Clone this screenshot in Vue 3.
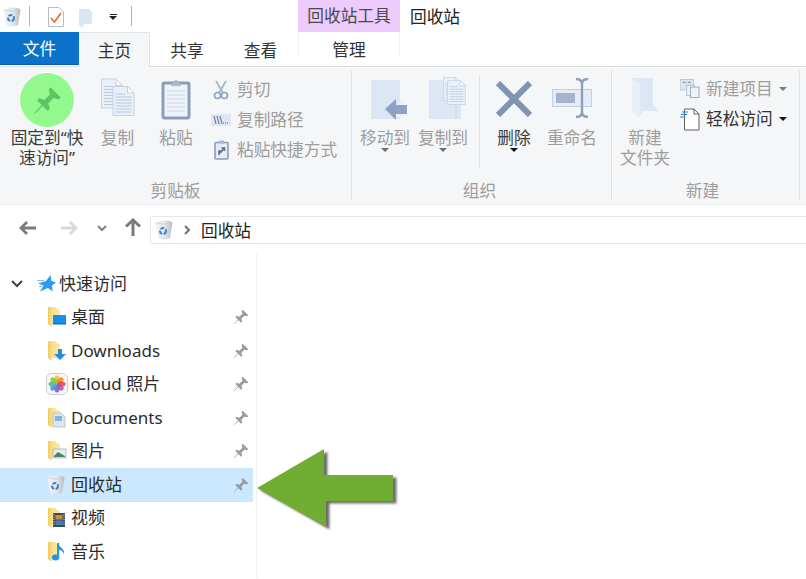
<script setup>
const navRows = [
  { label: '桌面', icon: 'desktop', pin: true },
  { label: 'Downloads', icon: 'download', pin: true },
  { label: 'iCloud 照片', icon: 'photos', pin: true },
  { label: 'Documents', icon: 'docs', pin: true },
  { label: '图片', icon: 'pictures', pin: true },
  { label: '回收站', icon: 'bin', pin: true, active: true },
  { label: '视频', icon: 'video', pin: false },
  { label: '音乐', icon: 'music', pin: false }
]
const petals = [
  ['#f2c230', 0], ['#f08a2c', 45], ['#e8483c', 90], ['#c04fa8', 135],
  ['#7a62c8', 180], ['#4a90e0', 225], ['#52b8a0', 270], ['#8cc63f', 315]
]
</script>

<template>
  <div class="window">
    <svg class="defs" width="0" height="0" aria-hidden="true">
      <defs>
        <linearGradient id="binGrad" x1="0" y1="0" x2="1" y2="0">
          <stop offset="0" stop-color="#f4f5f6" />
          <stop offset="0.6" stop-color="#e0e3e5" />
          <stop offset="1" stop-color="#b4b9bd" />
        </linearGradient>
        <linearGradient id="folderGrad" x1="0" y1="0" x2="1" y2="0">
          <stop offset="0" stop-color="#eecb63" />
          <stop offset="0.35" stop-color="#fbe08a" />
          <stop offset="1" stop-color="#fde9a5" />
        </linearGradient>
        <filter id="soft" x="-10%" y="-10%" width="120%" height="120%">
          <feGaussianBlur stdDeviation="0.9" />
        </filter>
        <symbol id="pin" viewBox="0 0 24 24">
          <path d="M14.5 1 L23 9.5 L21 11 L17 10 L12.5 14.5 L14 19 L12 20.5 L8 16.5 L1.5 23 L1 22.5 L7.3 15.7 L3.5 12 L5 10 L9.5 11.5 L14 7 L13 3Z" />
        </symbol>
        <symbol id="bin" viewBox="0 0 18 20">
          <path d="M0.5 3 L3 1.5 Q9 0 15 1 L17.5 2.5 L15 18 Q9 20.5 3.5 18.5Z" fill="url(#binGrad)" />
          <path d="M0.5 3 Q9 5.5 17.5 2.5" fill="none" stroke="#c9cdd1" stroke-width=".8" />
          <circle cx="8" cy="11" r="3" fill="none" stroke="#2f86d8" stroke-width="2" stroke-dasharray="4 1.5" />
        </symbol>
        <symbol id="folder" viewBox="0 0 20 20">
          <path d="M1 0 H8 L10 2 L13 3 V17 H5 V20 L1 17Z" fill="url(#folderGrad)" />
        </symbol>
        <symbol id="doc" viewBox="0 0 22 30">
          <path d="M.5 .5 H15 L21.5 7 V29.5 H.5Z" fill="#eaf0f9" stroke="#c5d1e3" />
          <path d="M15 .5 V7 H21.5Z" fill="#fafcff" stroke="#c5d1e3" />
          <path d="M3 8h10M3 11h16M3 14h16M3 17h16M3 20h16M3 23h16M3 26h16" stroke="#bcc8db" stroke-width="1" />
        </symbol>
      </defs>
    </svg>

    <div class="titlebar">
      <div class="qat">
        <svg class="qat-bin" width="18" height="20"><use href="#bin" /></svg>
        <span class="qat-sep"></span>
        <svg class="qat-check" width="16" height="20" viewBox="0 0 16 20">
          <path d="M.5 .5 H11 L15.5 5 V19.5 H.5Z" fill="#fff" stroke="#b9bdc3" />
          <path d="M3 11 L6.5 15 L13 6" fill="none" stroke="#ef6a23" stroke-width="1.7" />
        </svg>
        <svg class="qat-folder" width="14" height="19" viewBox="0 0 14 19">
          <path d="M0 0 H10 L13 3 V15 H5 L3 19 L0 16Z" fill="#dbe6f5" />
        </svg>
        <span class="qat-more"><i></i><b></b></span>
        <span class="qat-sep last"></span>
      </div>
      <div class="context-tab">回收站工具</div>
      <div class="title">回收站</div>
    </div>

    <div class="tabs">
      <div class="tab file">文件</div>
      <div class="tab home">主页</div>
      <div class="tab share">共享</div>
      <div class="tab view">查看</div>
      <div class="tab manage">管理</div>
    </div>

    <div class="ribbon">
      <section class="group g1">
        <div class="group-body">
          <div class="big pin-btn">
            <div class="big-icon">
              <span class="pin-circle">
                <svg class="pin-big" width="31" height="29"><use href="#pin" /></svg>
              </span>
            </div>
            <div class="big-text dark">固定到“快<br />速访问”</div>
          </div>
          <div class="big copy-btn">
            <div class="big-icon">
              <svg width="36" height="40" viewBox="0 0 36 40">
                <use href="#doc" x="1" y="0" width="22" height="31" />
                <use href="#doc" x="12" y="8" width="23" height="30" />
              </svg>
            </div>
            <div class="big-text">复制</div>
          </div>
          <div class="big paste-btn">
            <div class="big-icon">
              <svg width="30" height="42" viewBox="0 0 30 42">
                <rect x="2" y="5" width="26" height="35" rx="1.5" fill="#eef2f9" stroke="#8c9dbc" stroke-width="3" />
                <path d="M6 13h18M6 17h18M6 21h18M6 25h18M6 29h18M6 33h18" stroke="#cdd7e7" />
                <path d="M11 6 L13 3 A2.5 2.5 0 0 1 17 3 L19 6 L20 8 H10Z" fill="#aab8d0" />
              </svg>
            </div>
            <div class="big-text">粘贴</div>
          </div>
          <div class="small-col clip-col">
            <div class="small">
              <span class="small-icon">
                <svg width="16" height="20" viewBox="0 0 16 20">
                  <path d="M3 1 L10 13 M13 1 L6 13" stroke="#a9b6cb" stroke-width="1.8" fill="none" />
                  <circle cx="4.5" cy="15.5" r="3" fill="none" stroke="#8ca0bf" stroke-width="1.6" />
                  <circle cx="11.5" cy="15.5" r="3" fill="none" stroke="#8ca0bf" stroke-width="1.6" />
                </svg>
              </span>
              <span>剪切</span>
            </div>
            <div class="small">
              <span class="small-icon">
                <svg width="20" height="12" viewBox="0 0 20 12">
                  <rect width="20" height="12" fill="#dfe6f3" />
                  <path d="M3 2 L5 10 M6 2 L8 10 M9 2 L11 10" stroke="#5f6b7c" stroke-width="1" fill="none" />
                  <path d="M12 9h6" stroke="#5f6b7c" stroke-dasharray="1 1" />
                </svg>
              </span>
              <span>复制路径</span>
            </div>
            <div class="small">
              <span class="small-icon">
                <svg width="15" height="20" viewBox="0 0 15 20">
                  <rect x="1" y="2.5" width="13" height="16.5" rx="1" fill="#e5ebf5" stroke="#8c9dbc" stroke-width="1.6" />
                  <rect x="5" y="0.5" width="5" height="3" fill="#aab8d0" />
                  <path d="M5 15 V11 H8 M6 13 L10 8.5 M7.5 8 H10.5 V11" stroke="#5e6f8a" stroke-width="1.6" fill="none" />
                </svg>
              </span>
              <span>粘贴快捷方式</span>
            </div>
          </div>
        </div>
        <div class="group-label">剪贴板</div>
      </section>

      <section class="group g2">
        <div class="group-body">
          <div class="big move-btn">
            <div class="big-icon">
              <svg class="move-icon" width="37" height="43" viewBox="0 0 37 43">
                <rect x="0" y="2" width="29" height="39" fill="#dde6f5" />
                <path d="M29 21 L33 26 V39 H22Z" fill="#edf1f8" />
                <path d="M14 31 L25 21 V27 H36 V36 H25 V42Z" fill="#8ea3c3" />
              </svg>
            </div>
            <div class="big-text">移动到</div>
            <i class="caret"></i>
          </div>
          <div class="big copyto-btn">
            <div class="big-icon">
              <svg class="copyto-icon" width="38" height="43" viewBox="0 0 38 43">
                <rect x="0" y="3" width="32" height="39" fill="#dde6f5" />
                <path d="M27 3 V42" stroke="#cbd6e8" />
                <use href="#doc" x="14" y="0" width="18" height="24" />
                <use href="#doc" x="18" y="3" width="19" height="25" />
              </svg>
            </div>
            <div class="big-text">复制到</div>
            <i class="caret"></i>
          </div>
          <span class="inner-sep"></span>
          <div class="big delete-btn">
            <div class="big-icon">
              <svg width="36" height="36" viewBox="0 0 36 36">
                <path d="M2 2 L34 34 M34 2 L2 34" stroke="#8193b2" stroke-width="6" />
              </svg>
            </div>
            <div class="big-text dark">删除</div>
            <i class="caret black"></i>
          </div>
          <div class="big rename-btn">
            <div class="big-icon">
              <svg width="42" height="40" viewBox="0 0 42 40">
                <rect x="1.5" y="11.5" width="39" height="17" fill="#e5ebf7" stroke="#c4cfe2" />
                <rect x="5" y="15" width="19" height="10" fill="#a5b3cc" />
                <path d="M25 1 C29 1 31 3 31 6 V34 C31 37 29 39 25 39 M37 1 C33 1 31 3 31 6 M31 34 C31 37 33 39 37 39" fill="none" stroke="#8d9fbd" stroke-width="2.4" />
              </svg>
            </div>
            <div class="big-text">重命名</div>
          </div>
        </div>
        <div class="group-label">组织</div>
      </section>

      <section class="group g3">
        <div class="group-body">
          <div class="big newfolder-btn">
            <div class="big-icon">
              <svg width="28" height="40" viewBox="0 0 28 40">
                <path d="M1 0 H22 V26 L27 33 H11 L8 39 L1 33Z" fill="#dde6f4" />
                <path d="M1 0 L9 6 V39 L1 33Z" fill="#e9eff8" />
              </svg>
            </div>
            <div class="big-text">新建<br />文件夹</div>
          </div>
          <div class="small-col new-col">
            <div class="small">
              <span class="small-icon wide">
                <svg width="21" height="20" viewBox="0 0 21 20">
                  <rect x="0" y="0" width="14" height="11" fill="#dfe6f3" stroke="#b8c5da" />
                  <rect x="7" y="6" width="8" height="11" fill="#eef2f9" stroke="#aebcd3" />
                  <rect x="11" y="8" width="9" height="11" fill="#eef2f9" stroke="#98a9c4" />
                  <path d="M3 3h3M8 3h3" stroke="#6c7c94" />
                </svg>
              </span>
              <span>新建项目</span>
              <i class="caret side"></i>
            </div>
            <div class="small dark">
              <span class="small-icon wide">
                <svg width="20" height="23" viewBox="0 0 20 23">
                  <path d="M4.5 1 H14 L19 6 V22 H4.5Z" fill="#fff" stroke="#5e6166" />
                  <path d="M14 1 V6 H19" fill="none" stroke="#5e6166" />
                  <path d="M2 4h6M1 6.5h6M0 9h5" stroke="#2f86d8" />
                </svg>
              </span>
              <span>轻松访问</span>
              <i class="caret side black"></i>
            </div>
          </div>
        </div>
        <div class="group-label">新建</div>
      </section>
    </div>

    <div class="addressrow">
      <svg class="nav-arrow back" width="18" height="14" viewBox="0 0 18 14">
        <path d="M17 7 H2 M8 1 L2 7 L8 13" fill="none" stroke="#7a7a7a" stroke-width="2.8" />
      </svg>
      <svg class="nav-arrow forward" width="18" height="14" viewBox="0 0 18 14">
        <path d="M1 7 H16 M10 1 L16 7 L10 13" fill="none" stroke="#d8d8d8" stroke-width="2.8" />
      </svg>
      <svg class="nav-arrow down" width="10" height="7" viewBox="0 0 10 7">
        <path d="M1 1 L5 5 L9 1" fill="none" stroke="#808080" stroke-width="2" />
      </svg>
      <svg class="nav-arrow up" width="16" height="18" viewBox="0 0 16 18">
        <path d="M8 18 V2 M1 8.5 L8 2 L15 8.5" fill="none" stroke="#7a7a7a" stroke-width="3" />
      </svg>
      <div class="addressbox">
        <svg class="addr-bin" width="18" height="20"><use href="#bin" /></svg>
        <svg class="addr-chev" width="7" height="10" viewBox="0 0 7 10">
          <path d="M1 1 L5 5 L1 9" fill="none" stroke="#707070" stroke-width="2" />
        </svg>
        <span class="addr-text">回收站</span>
      </div>
    </div>

    <div class="content">
      <nav class="nav">
        <div class="row quick">
          <svg class="expander" width="12" height="8" viewBox="0 0 12 8">
            <path d="M1 1 L6 6 L11 1" fill="none" stroke="#444" stroke-width="2" />
          </svg>
          <svg class="star" width="19" height="17" viewBox="0 0 19 17">
            <path d="M13.5 0 L14.5 6 L19 7.5 L15 10.5 L15.5 16.5 L11 13 L3 16.5 L6.5 10.5 L1 8.5 L9 6Z" fill="#2b9cf2" />
            <path d="M0 5.5h7M2 11.5h3" stroke="#7cc2f5" />
          </svg>
          <span class="label">快速访问</span>
        </div>
        <div v-for="r in navRows" :key="r.label" class="row item" :class="{ active: r.active }">
          <span class="nav-icon">
            <svg v-if="r.icon === 'bin'" class="row-bin" width="18" height="20"><use href="#bin" /></svg>
            <svg v-else-if="r.icon === 'photos'" class="row-photos" width="22" height="22" viewBox="0 0 22 22">
              <rect x=".5" y=".5" width="21" height="21" rx="5" fill="#f7f7f7" stroke="#cfcfcf" />
              <ellipse v-for="p in petals" :key="p[1]" cx="11" cy="6.5" rx="2.6" ry="4" :fill="p[0]" fill-opacity=".9" :transform="`rotate(${p[1]} 11 11)`" />
            </svg>
            <svg v-else width="21" height="20" viewBox="0 0 21 20">
              <use href="#folder" width="20" height="20" />
              <template v-if="r.icon === 'desktop'">
                <rect x="6" y="8" width="13" height="9" fill="#1590ee" />
                <rect x="6" y="16" width="13" height="1.5" fill="#0d6fc0" />
              </template>
              <path v-if="r.icon === 'download'" d="M11 8 H15 V13 H19 L13 19 L7 13 H11Z" fill="#2b8ae0" />
              <template v-if="r.icon === 'docs'">
                <path d="M6 5 H14 L18 9 V19 H6Z" fill="#dde4ec" stroke="#aeb7c2" stroke-width=".7" />
                <rect x="8" y="8" width="7" height="5" fill="#7fb7e6" />
              </template>
              <template v-if="r.icon === 'pictures'">
                <rect x="6" y="8" width="13" height="9" fill="#e7edf2" stroke="#9aa7b3" stroke-width=".7" />
                <path d="M7 15 L11 11 L18 15 V16 H7Z" fill="#4d7f63" />
              </template>
              <template v-if="r.icon === 'video'">
                <rect x="6" y="5" width="12" height="14" fill="#3b4a5e" />
                <rect x="8.5" y="7" width="7" height="4.5" fill="#d8872e" />
                <rect x="8.5" y="12.5" width="7" height="4.5" fill="#3c83c4" />
                <path d="M7 6v12M17 6v12" stroke="#cfd6dd" stroke-dasharray="1.2 1.2" />
              </template>
              <template v-if="r.icon === 'music'">
                <path d="M11 1 V14" stroke="#2294e8" stroke-width="2" />
                <path d="M11 1 C12 6 18 6 17 12 C16 9 13 8 11 7Z" fill="#2294e8" />
                <ellipse cx="8.5" cy="15.5" rx="3.6" ry="3" fill="#2294e8" />
              </template>
            </svg>
          </span>
          <span class="label">{{ r.label }}</span>
          <svg v-if="r.pin" class="row-pin" width="16" height="16"><use href="#pin" /></svg>
        </div>
      </nav>
      <svg class="green-arrow" width="146" height="86" viewBox="0 0 146 86">
        <path d="M1 40 L68 1 L68 27 L137 27 L137 53 L70 53 L70 79Z" fill="#4a4a4a" fill-opacity=".8" filter="url(#soft)" transform="translate(3.5 2.5)" />
        <path d="M1 40 L68 1 L68 27 L137 27 L137 53 L70 53 L70 79Z" fill="#70ad32" />
      </svg>
    </div>
  </div>
</template>

<style scoped>
.window {
  width: 806px;
  height: 579px;
  overflow: hidden;
  position: relative;
  background: #fff;
  color: #3a3a3a;
  font-family: "Noto Sans", "Noto Sans CJK SC", sans-serif;
  font-size: 16.7px;
  line-height: 20px;
}
.defs { position: absolute; }

.titlebar { display: flex; height: 32px; }
.qat { display: flex; align-items: center; width: 298px; flex: none; }
.qat-bin { margin-left: 3px; margin-top: 1px; }
.qat-sep { width: 1px; height: 20px; background: #b5b5b5; margin-left: 8px; }
.qat-sep.last { margin-left: 14px; }
.qat-check { margin-left: 18px; margin-top: 2px; }
.qat-folder { margin-left: 15px; margin-top: 4px; }
.qat-more { display: flex; flex-direction: column; align-items: center; margin-left: 16px; gap: 1px; margin-top: 2px; }
.qat-more i { width: 7px; height: 1px; background: #222; }
.qat-more b { width: 0; height: 0; border: 4px solid transparent; border-top-color: #222; border-bottom-width: 0; }
.context-tab {
  width: 102px; flex: none; background: #eecbfd; color: #4a4a4a;
  text-align: center; line-height: 32px;
}
.title { margin-left: 10px; line-height: 33px; color: #222; }

.tabs { display: flex; height: 34px; position: relative; z-index: 1; }
.tab { text-align: center; line-height: 38px; color: #333; }
.file { width: 79px; background: #0a72c9; color: #fff; border-bottom: 1px solid #0a5fa8; height: 32px; line-height: 33px; }
.home {
  width: 71px; height: 35px; background: #f5f6f7;
  border: 1px solid #e2e3e5; border-bottom: 0; line-height: 35px; border-left-color: #f0f1f2; box-sizing: border-box;
}
.share { width: 74px; }
.view { width: 73px; }
.manage { width: 102px; height: 24px; line-height: 36px; margin-left: 1px; box-shadow: inset 1px 0 0 #f2ecf5, inset -1px 0 0 #f2ecf5; }

.ribbon {
  display: flex; height: 139px; box-sizing: border-box;
  background: #f5f6f7; border-top: 1px solid #dcdee0; border-bottom: 1px solid #e8e9eb;
}
.group {
  display: flex; flex-direction: column; flex: none;
  margin-top: 3px; margin-bottom: 4px;
  border-right: 1px solid #e0e2e5; box-sizing: border-box; padding-top: 2px;
}
.g1 { width: 352px; }
.g2 { width: 260px; padding-left: 4px; }
.g3 { width: 188px; }
.group-body { display: flex; height: 107px; }
.group-label { text-align: center; color: #9d9d9d; height: 20px; line-height: 24px; }
.g2 .group-label { margin-left: -8px; }
.g3 .group-label { margin-left: -6px; }

.big { display: flex; flex-direction: column; align-items: center; flex: none; color: #9d9d9d; text-align: center; }
.big-icon { height: 56px; display: flex; align-items: flex-start; justify-content: center; padding-top: 6px; box-sizing: border-box; }
.big-text { white-space: nowrap; }
.dark { color: #3c3c3c; }
.pin-btn { width: 94px; }
.pin-btn .big-icon { padding-top: 0; }
.copy-btn { width: 47px; }
.paste-btn { width: 70px; }
.move-btn, .copyto-btn { width: 58px; }
.move-icon { margin-left: 8px; }
.copyto-icon { margin-left: 10px; margin-top: -1px; }
.delete-btn { width: 68px; }
.delete-btn .big-icon { padding-top: 9px; }
.rename-btn { width: 48px; }
.newfolder-btn { width: 66px; }

.pin-circle {
  width: 54px; height: 54px; border-radius: 50%; background: #93f98e;
  display: flex; align-items: center; justify-content: center;
  margin-top: 1px; box-shadow: 0 0 2px #fff;
}
.pin-big { fill: #5cc462; margin-top: 1px; }

.caret { width: 0; height: 0; border: 4px solid transparent; border-top-color: #6f6f6f; border-bottom-width: 0; }
.caret.black { border-top-color: #111; }
.caret.side { margin: 0 0 0 6px; border-top-color: #7d7d7d; }
.caret.side.black { border-top-color: #111; }

.inner-sep { width: 1px; height: 92px; background: #dfe1e4; margin: 4px 0 0 7px; flex: none; }

.small-col { display: flex; flex-direction: column; color: #9d9d9d; padding-top: 3px; }
.small { display: flex; align-items: center; height: 30px; white-space: nowrap; }
.small.dark { color: #333; }
.small-icon { width: 20px; margin-right: 6px; display: flex; justify-content: center; flex: none; }
.small-icon.wide { justify-content: flex-start; }
.new-col { margin-left: 2px; padding-top: 2px; }

.addressrow { display: flex; align-items: center; height: 37px; padding-top: 1px; box-sizing: border-box; }
.nav-arrow { flex: none; }
.back { margin-left: 19px; margin-top: 8px; }
.forward { margin-left: 23px; margin-top: 8px; }
.down { margin-left: 19px; margin-top: 9px; }
.up { margin-left: 18px; margin-top: 6px; }
.addressbox {
  display: flex; align-items: center; flex: 1; height: 26px;
  margin-left: 9px; margin-top: 11px;
  border: 1px solid #e6e6e6; border-right: 0; border-radius: 2px 0 0 2px; color: #222;
}
.addr-bin { margin-left: 4px; }
.addr-chev { margin-left: 11px; margin-right: 10px; }
.addr-text { padding-top: 2px; }

.content { position: relative; }
.nav {
  width: 257px; height: 324px; box-sizing: border-box; font-size: 17px;
  margin-top: 12px; padding: 13px 3px 0 0; border-right: 1px solid #f0f0f0;
}
.row { display: flex; align-items: center; height: 33.5px; color: #2c2c2c; }
.expander { margin-left: 11px; }
.star { margin-left: 14px; margin-right: 3px; }
.item { padding-left: 46px; box-sizing: border-box; }
.item.active { background: #cce8ff; }
.nav-icon { width: 25px; flex: none; display: flex; }
.nav-icon svg { margin-left: 1px; }
.nav-icon svg.row-photos { margin-left: 0; }
.label { white-space: nowrap; }
.row-pin { margin-left: auto; margin-right: 4px; fill: #969da3; }

.green-arrow { position: absolute; left: 256px; top: 194px; }
</style>
